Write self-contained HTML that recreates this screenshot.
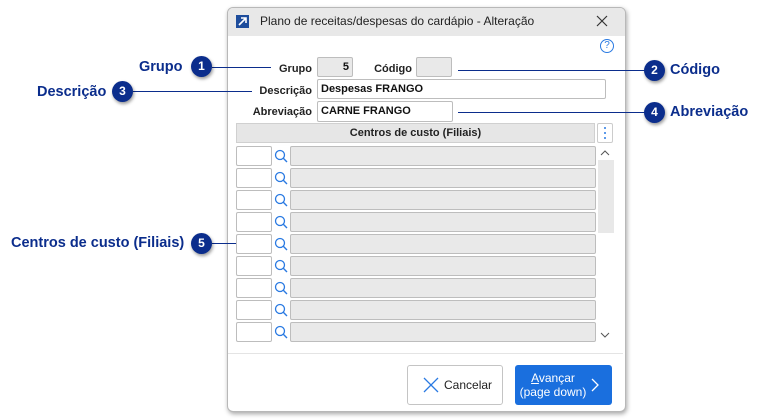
<!DOCTYPE html><html><head><style>
body{margin:0;width:765px;height:419px;background:#fff;font-family:"Liberation Sans",sans-serif;position:relative;overflow:hidden}
.a{position:absolute}
.dlg{left:227px;top:7px;width:397px;height:403px;border:1px solid #b8b8b8;border-radius:6px;box-shadow:1px 2px 5px rgba(0,0,0,.35);background:#fff;overflow:hidden}
.tb{left:0;top:0;width:397px;height:28px;background:#e8e8e8}
.lbl{font-size:11px;font-weight:bold;color:#222;text-align:right}
.inp{border:1px solid #bdbdbd;border-radius:2px;background:#fff;font-size:11px;font-weight:bold;color:#111;box-sizing:border-box;padding:3px 3px}
.gr{background:#e9e9e9}
.cl{background:#0b2d8c;color:#fff;border-radius:50%;width:21px;height:21px;font-size:12px;font-weight:bold;text-align:center;line-height:21px;box-shadow:1px 2px 3px rgba(0,0,0,.4)}
.ct{color:#0b2d8c;font-weight:bold;font-size:14.5px}
.ln{height:1px;background:#0b2d8c}
</style></head><body>
<div class="a dlg">
 <div class="a tb"></div>
 <div class="a" style="left:8px;top:7px;width:13px;height:13px;background:#1e4d9c"><svg width="13" height="13"><path d="M3 10L10 3M5 3H10V8" stroke="#fff" stroke-width="1.6" fill="none"/></svg></div>
 <div class="a" style="left:32px;top:6px;font-size:12px;color:#222">Plano de receitas/despesas do cardápio - Alteração</div>
 <svg class="a" style="left:368px;top:7px" width="12" height="12"><path d="M1 1L11 11M11 1L1 11" stroke="#333" stroke-width="1.2"/></svg>
 <div class="a" style="left:372px;top:31px;width:12px;height:12px;border:1.3px solid #2a7ae2;border-radius:50%;color:#2a7ae2;font-size:10px;text-align:center;line-height:12px">?</div>
</div>
<div class="a lbl" style="left:260px;top:63px;width:52px">Grupo</div>
<div class="a inp gr" style="left:317px;top:57px;width:36px;height:20px;text-align:right">5</div>
<div class="a lbl" style="left:360px;top:63px;width:52px">Código</div>
<div class="a inp gr" style="left:416px;top:57px;width:36px;height:20px"></div>
<div class="a lbl" style="left:230px;top:85px;width:82px">Descrição</div>
<div class="a inp" style="left:317px;top:79px;width:289px;height:20px">Despesas FRANGO</div>
<div class="a lbl" style="left:230px;top:106px;width:82px">Abreviação</div>
<div class="a inp" style="left:317px;top:101px;width:136px;height:21px">CARNE FRANGO</div>
<div class="a" style="left:236px;top:123px;width:359px;height:20px;background:#e6e6e6;border:1px solid #d0d0d0;box-sizing:border-box;font-size:11px;font-weight:bold;text-align:center;line-height:19px;color:#222">Centros de custo (Filiais)</div>
<div class="a" style="left:597px;top:123px;width:16px;height:20px;border:1px solid #ccc;box-sizing:border-box;border-radius:2px"><svg width="14" height="18"><circle cx="7" cy="4" r="1" fill="#2a7ae2"/><circle cx="7" cy="9" r="1" fill="#2a7ae2"/><circle cx="7" cy="14" r="1" fill="#2a7ae2"/></svg></div>
<div class="a" style="left:598px;top:160px;width:16px;height:73px;background:#e8e8e8"></div>
<svg class="a" style="left:600px;top:149px" width="10" height="8"><path d="M1 6L5 2L9 6" stroke="#555" fill="none"/></svg>
<svg class="a" style="left:600px;top:331px" width="10" height="8"><path d="M1 2L5 6L9 2" stroke="#555" fill="none"/></svg>
<div id="rows"></div>
<div class="a" style="left:228px;top:353px;width:395px;height:1px;background:#e4e4e4"></div>
<div class="a" style="left:407px;top:365px;width:96px;height:40px;border:1px solid #c4c4c4;border-radius:3px;box-sizing:border-box"></div>
<svg class="a" style="left:423px;top:377px" width="16" height="16"><path d="M1 1L15 15M15 1L1 15" stroke="#2a7ae2" stroke-width="1.3"/></svg>
<div class="a" style="left:444px;top:378px;font-size:12px;color:#222">Cancelar</div>
<div class="a" style="left:515px;top:365px;width:97px;height:40px;background:#1a6fde;border-radius:3px"></div>
<div class="a" style="left:518px;top:371px;width:70px;font-size:12px;color:#fff;text-align:center;line-height:14px"><u>A</u>vançar<br>(page down)</div>
<svg class="a" style="left:591px;top:378px" width="8" height="14"><path d="M1 1L7 7L1 13" stroke="#fff" stroke-width="1.3" fill="none"/></svg>
<div class="a ln" style="left:212px;top:67px;width:59px"></div>
<div class="a ln" style="left:458px;top:70px;width:188px"></div>
<div class="a ln" style="left:133px;top:91px;width:119px"></div>
<div class="a ln" style="left:458px;top:112px;width:188px"></div>
<div class="a ln" style="left:212px;top:243px;width:24px"></div>
<div class="a ct" style="left:139px;top:59px">Grupo</div><div class="a cl" style="left:191px;top:56px">1</div>
<div class="a ct" style="left:37px;top:84px">Descrição</div><div class="a cl" style="left:112px;top:81px">3</div>
<div class="a ct" style="left:11px;top:235px">Centros de custo (Filiais)</div><div class="a cl" style="left:191px;top:233px">5</div>
<div class="a cl" style="left:644px;top:60px">2</div><div class="a ct" style="left:670px;top:62px">Código</div>
<div class="a cl" style="left:644px;top:102px">4</div><div class="a ct" style="left:670px;top:104px">Abreviação</div>
<script>
var h='';for(var i=0;i<9;i++){var y=146+i*22;
h+='<div class="a inp" style="left:236px;top:'+y+'px;width:36px;height:20px"></div>';
h+='<svg class="a" style="left:274px;top:'+(y+3)+'px" width="14" height="14"><circle cx="6" cy="6" r="4.5" stroke="#2a7ae2" stroke-width="1.3" fill="none"/><path d="M9.3 9.3L13 13" stroke="#2a7ae2" stroke-width="1.4"/></svg>';
h+='<div class="a inp gr" style="left:290px;top:'+y+'px;width:306px;height:20px"></div>';}
document.getElementById('rows').innerHTML=h;
</script>
</body></html>
